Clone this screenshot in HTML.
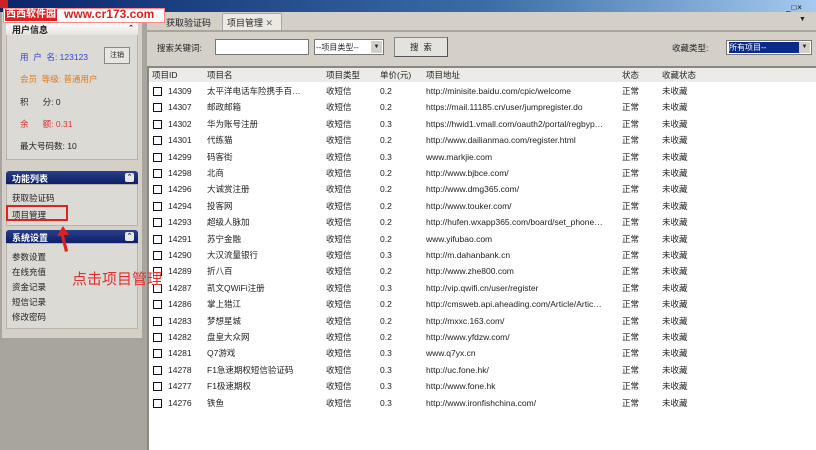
<!DOCTYPE html>
<html><head><meta charset="utf-8"><style>
*{margin:0;padding:0;box-sizing:border-box}
body{width:816px;height:450px;overflow:hidden;background:#d4d0c8;font-family:"Liberation Sans","Noto Sans CJK SC",sans-serif;font-size:8.5px;color:#222;position:relative}
.a{position:absolute;white-space:nowrap}
.hdr{position:absolute;left:6px;width:132px;height:13px;background:linear-gradient(#2a3f8c,#0c1f66);color:#fff;font-weight:bold;font-size:9px;padding:1px 6px;border-radius:3px 3px 0 0}
.hdr i{position:absolute;right:4px;top:2px;width:9px;height:9px;background:#e8e8e8;border-radius:2px;font-style:normal;color:#333;font-size:7px;line-height:9px;text-align:center}
.box{position:absolute;left:6px;width:132px;background:#dcdad5;border:1px solid #b8b4ac}
.r{position:absolute;left:148px;width:668px;height:16px;line-height:16px;font-size:8.5px}
.r span{position:absolute}
.cb{position:absolute;left:5px;top:4px;width:9px;height:9px;border:1.5px solid #111;background:#fff}
</style></head><body>
<div class="a" style="left:0;top:0;width:816px;height:12px;background:linear-gradient(90deg,#0a246a,#3a6ea5 60%,#a6caf0)"></div>
<div class="a" style="left:0;top:0;width:8px;height:8px;background:#c22"></div>
<div class="a" style="left:786px;top:3px;font-size:8px;color:#000;letter-spacing:1px">_□×</div>
<!-- main -->
<div class="a" style="left:147px;top:12px;width:669px;height:20px;background:#d4d0c8;border-bottom:2px solid #a8a59e"></div>
<div class="a" style="left:160px;top:14px;width:60px;height:16px;padding:2px 6px;font-size:9px">获取验证码</div>
<div class="a" style="left:222px;top:13px;width:60px;height:17px;background:#ece9e2;border:1px solid #aaa;border-bottom:none;padding:2px 4px;font-size:9px">项目管理 <span style="color:#666">✕</span></div>
<div class="a" style="left:799px;top:16px;font-size:7px">▼</div>
<div class="a" style="left:147px;top:32px;width:669px;height:34px;background:#d4d0c8"></div>
<div class="a" style="left:157px;top:42px">搜索关键词:</div>
<div class="a" style="left:215px;top:39px;width:94px;height:16px;background:#fff;border:1px solid #777"></div>
<div class="a" style="left:314px;top:39px;width:70px;height:16px;background:#fff;border:1px solid #777;font-size:8px;padding:2px 1px">--项目类型--<span style="position:absolute;right:1px;top:1px;width:11px;height:12px;background:#d4d0c8;font-size:6px;text-align:center;line-height:12px">▼</span></div>
<div class="a" style="left:394px;top:37px;width:54px;height:20px;background:#e4e2dc;border:1px solid #888;border-right-color:#555;border-bottom-color:#555;text-align:center;line-height:18px">搜&nbsp;&nbsp;索</div>
<div class="a" style="left:672px;top:42px">收藏类型:</div>
<div class="a" style="left:726px;top:40px;width:86px;height:15px;background:#fff;border:1px solid #777"><span style="position:absolute;left:2px;top:1px;width:70px;height:11px;background:#0a2a8a;color:#fff;font-size:8px;line-height:11px">所有项目--</span><span style="position:absolute;right:1px;top:1px;width:11px;height:11px;background:#d4d0c8;font-size:6px;text-align:center;line-height:11px">▼</span></div>
<div class="a" style="left:147px;top:66px;width:669px;height:384px;background:#fff;border-top:2px solid #8a8780;border-left:2px solid #8a8780"></div>
<div class="a" style="left:149px;top:68px;width:667px;height:14px;background:#ecebe8"></div>
<div class="r" style="top:67px"><span style="left:4px">项目ID</span><span style="left:59px">项目名</span><span style="left:178px">项目类型</span><span style="left:232px">单价(元)</span><span style="left:278px">项目地址</span><span style="left:474px">状态</span><span style="left:514px">收藏状态</span></div>
<div id="rows"></div>
<!-- left panel -->
<div class="a" style="left:0;top:12px;width:147px;height:438px;background:#a8a59e"></div>
<div class="a" style="left:2px;top:12px;width:140px;height:326px;background:#d4d0c8"></div>
<div class="box" style="top:22px;height:138px"></div>
<div class="a" style="left:6px;top:22px;width:132px;height:13px;background:linear-gradient(#fff,#e4e2dc);font-weight:bold;padding:1px 6px;font-size:9px">用户信息<span style="position:absolute;right:4px;top:2px;font-size:7px">⌃</span></div>
<div class="a" style="left:20px;top:51px;color:#3344cc">用&nbsp;&nbsp;户&nbsp;&nbsp;名: 123123</div>
<div class="a" style="left:104px;top:47px;width:26px;height:17px;border:1px solid #888;background:#e8e6e0;font-size:7px;text-align:center;line-height:15px">注销</div>
<div class="a" style="left:20px;top:73px;color:#e07a20">会员&nbsp; 等级: 普通用户</div>
<div class="a" style="left:20px;top:96px">积&nbsp;&nbsp;&nbsp;&nbsp;&nbsp;&nbsp;分: 0</div>
<div class="a" style="left:20px;top:118px;color:#e03030">余&nbsp;&nbsp;&nbsp;&nbsp;&nbsp;&nbsp;额: 0.31</div>
<div class="a" style="left:20px;top:140px">最大号码数: 10</div>
<div class="hdr" style="top:171px">功能列表<i>⌃</i></div>
<div class="box" style="top:184px;height:42px"></div>
<div class="a" style="left:12px;top:192px">获取验证码</div>
<div class="a" style="left:12px;top:209px">项目管理</div>
<div class="a" style="left:6px;top:205px;width:62px;height:16px;border:2px solid #d22"></div>
<div class="hdr" style="top:230px">系统设置<i>⌃</i></div>
<div class="box" style="top:243px;height:86px"></div>
<div class="a" style="left:12px;top:251px">参数设置</div>
<div class="a" style="left:12px;top:266px">在线充值</div>
<div class="a" style="left:12px;top:281px">资金记录</div>
<div class="a" style="left:12px;top:296px">短信记录</div>
<div class="a" style="left:12px;top:311px">修改密码</div>
<svg class="a" style="left:56px;top:224px" width="16" height="30"><path d="M7 2 L1 12 L5 12 L9 28 L12 27 L8 11 L13 11Z" fill="#e02020"/></svg>
<div class="a" style="left:72px;top:268px;color:#e03030;font-size:15px">点击项目管理</div>
<!-- watermark -->
<div class="a" style="left:3px;top:8px;width:162px;height:15px;background:#fff;border:1px solid #f88"></div>
<div class="a" style="left:5px;top:9px;color:#fff;background:#e02020;font-weight:bold;font-size:10px;line-height:12px;padding:0 1px">西西软件园</div>
<div class="a" style="left:64px;top:7px;color:#e02020;font-weight:bold;font-size:12px;line-height:15px">www.cr173.com</div>
<script>
var d=[["14309","太平洋电话车险携手百…","0.2","http://minisite.baidu.com/cpic/welcome"],["14307","邮政邮箱","0.2","https://mail.11185.cn/user/jumpregister.do"],["14302","华为账号注册","0.3","https://hwid1.vmall.com/oauth2/portal/regbyp…"],["14301","代练猫","0.2","http://www.dailianmao.com/register.html"],["14299","码客街","0.3","www.markjie.com"],["14298","北商","0.2","http://www.bjbce.com/"],["14296","大诚赏注册","0.2","http://www.dmg365.com/"],["14294","投客网","0.2","http://www.touker.com/"],["14293","超级人脉加","0.2","http://hufen.wxapp365.com/board/set_phone…"],["14291","苏宁金融","0.2","www.yifubao.com"],["14290","大汉流量银行","0.3","http://m.dahanbank.cn"],["14289","折八百","0.2","http://www.zhe800.com"],["14287","凯文QWiFi注册","0.3","http://vip.qwifi.cn/user/register"],["14286","掌上猎江","0.2","http://cmsweb.api.aheading.com/Article/Artic…"],["14283","梦想星城","0.2","http://mxxc.163.com/"],["14282","盘皇大众网","0.2","http://www.yfdzw.com/"],["14281","Q7游戏","0.3","www.q7yx.cn"],["14278","F1急速期权短信验证码","0.3","http://uc.fone.hk/"],["14277","F1极速期权","0.3","http://www.fone.hk"],["14276","铁鱼","0.3","http://www.ironfishchina.com/"]];
var h="";d.forEach(function(r,i){h+='<div class="r" style="top:'+(83+i*16.4)+'px"><i class="cb"></i><span style="left:20px">'+r[0]+'</span><span style="left:59px">'+r[1]+'</span><span style="left:178px">收短信</span><span style="left:232px">'+r[2]+'</span><span style="left:278px">'+r[3]+'</span><span style="left:474px">正常</span><span style="left:514px">未收藏</span></div>'});
document.getElementById("rows").outerHTML=h;
</script>
</body></html>
